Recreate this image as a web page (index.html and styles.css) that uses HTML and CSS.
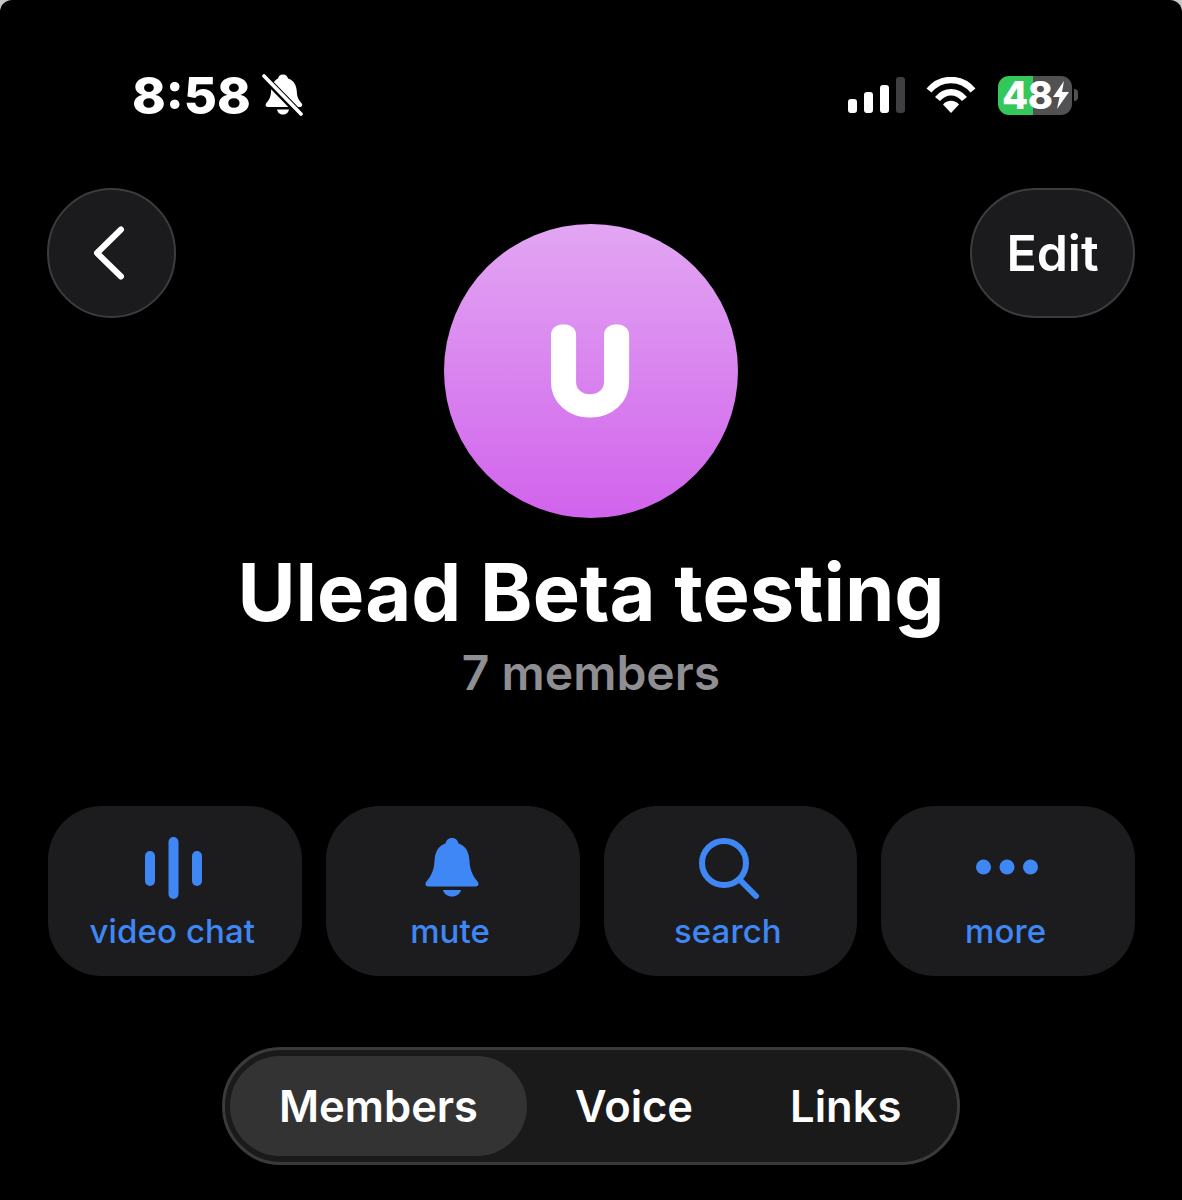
FILE: index.html
```html
<!DOCTYPE html>
<html lang="en">
<head>
    <meta charset="UTF-8">
    <meta name="viewport" content="width=device-width, initial-scale=1.0">
    <title>Ulead Beta testing</title>
    <link rel="stylesheet" href="styles.css">
</head>
<body>
    <div class="screen">
        <div class="status-bar">
            <div class="status-left">
                <span class="clock">8:58</span>
                <svg class="silent-icon" viewBox="0 0 42 44" aria-hidden="true">
                    <path fill="#fff" d="M21 1.500c3 0 4.600 2 5 4 6 1.800 8.500 7 8.800 13 .2 5 1.500 8 5 12 1 1.500.3 3.500-2 3.500H6c-2.300 0-3-2-2-3.500 3.500-4 4.800-7 5-12 .3-6 3-11.200 7-13 .4-2 2-4 5-4z"/>
                    <path fill="#fff" d="M15 36.500h12c-.5 3-3 5-6 5s-5.500-2-6-5z"/>
                    <path stroke="#000" stroke-width="7" d="M-1 1 41 44"/>
                    <path stroke="#fff" stroke-width="3.600" stroke-linecap="round" d="M2 3 39 41"/>
                </svg>
            </div>
            <div class="status-right">
                <div class="signal">
                    <span class="bar bar-1"></span>
                    <span class="bar bar-2"></span>
                    <span class="bar bar-3"></span>
                    <span class="bar bar-4"></span>
                </div>
                <svg class="wifi-icon" viewBox="0 0 50 36" aria-hidden="true">
                    <path fill="none" stroke="#fff" stroke-width="6.500" d="M3 13.500C15-.5 35-.5 47 13.500"/>
                    <path fill="none" stroke="#fff" stroke-width="6.500" d="M11.500 22C19 13 31 13 38.500 22"/>
                    <path fill="#fff" d="M25 36 17 27.500C21 22.500 29 22.500 33 27.500z"/>
                </svg>
                <div class="battery">
                    <div class="battery-body">
                        <span class="battery-level">48</span>
                        <svg class="bolt" viewBox="0 0 16 28" aria-hidden="true">
                            <path fill="#fff" d="M11 0 0 16h6.500L4 28 16 11H9z"/>
                        </svg>
                    </div>
                    <span class="battery-nub"></span>
                </div>
            </div>
        </div>

        <div class="header">
            <button class="round-btn back-btn" aria-label="Back">
                <svg viewBox="0 0 34 56" class="back-icon" aria-hidden="true">
                    <path fill="none" stroke="#fff" stroke-width="6" stroke-linecap="round" stroke-linejoin="round" d="M28 4.500 4 28l24 23.500"/>
                </svg>
            </button>
            <div class="avatar">
                <svg class="avatar-letter" viewBox="0 0 294 294">
                    <text transform="translate(146 182) scale(1.08 1)">U</text>
                </svg>
            </div>
            <button class="round-btn edit-btn">Edit</button>
        </div>

        <div class="group-info">
            <h1 class="group-name">Ulead Beta testing</h1>
            <p class="group-count">7 members</p>
        </div>

        <div class="actions">
            <div class="action-card">
                <svg class="action-icon" viewBox="0 0 64 64" aria-hidden="true">
                    <rect x="3" y="15" width="10" height="35" rx="5"/>
                    <rect x="26.500" y="1" width="10" height="62" rx="5"/>
                    <rect x="50" y="15" width="10" height="35" rx="5"/>
                </svg>
                <span>video chat</span>
            </div>
            <div class="action-card">
                <svg class="action-icon" viewBox="0 0 64 64" aria-hidden="true">
                    <path d="M32 2c3.500 0 5.800 2.200 6.300 5.200C46 10 49 16 49.500 25c.4 8 2.500 14 8 20.500 1.800 2 1.200 5-1.800 5H8.300c-3 0-3.600-3-1.800-5C12 39 14.100 33 14.500 25 15 16 18 10 25.700 7.200 26.200 4.200 28.500 2 32 2z"/>
                    <path d="M23 54h18c-1 4-4.500 6.500-9 6.500S24 58 23 54z"/>
                </svg>
                <span>mute</span>
            </div>
            <div class="action-card">
                <svg class="action-icon" viewBox="0 0 64 64" aria-hidden="true">
                    <circle class="line" cx="27" cy="27" r="22"/>
                    <path class="line" d="M43 44 59 60"/>
                </svg>
                <span>search</span>
            </div>
            <div class="action-card">
                <svg class="action-icon" viewBox="0 0 64 64" aria-hidden="true">
                    <circle cx="8.500" cy="31" r="7.500"/>
                    <circle cx="32" cy="31" r="7.500"/>
                    <circle cx="55.500" cy="31" r="7.500"/>
                </svg>
                <span>more</span>
            </div>
        </div>

        <div class="tabs-row">
            <div class="tabs">
                <div class="tab active">Members</div>
                <div class="tab voice">Voice</div>
                <div class="tab links">Links</div>
            </div>
        </div>
    </div>
</body>
</html>
```

FILE: styles.css
```css
html, body {
    margin: 0;
    padding: 0;
    background: #c8c8c8;
}
body {
    font-family: Inter, "Liberation Sans", sans-serif;
    color: #fff;
}
.screen {
    width: 1182px;
    height: 1200px;
    overflow: hidden;
    background: #000;
    border-radius: 12px 12px 0 0;
    box-sizing: border-box;
    padding: 0 47px;
}
.status-bar {
    display: flex;
    justify-content: space-between;
    align-items: center;
    height: 188px;
    padding-top: 2px;
    box-sizing: border-box;
}
.status-left {
    display: flex;
    align-items: center;
    gap: 11px;
    margin-left: 85px;
}
.clock {
    font-size: 51px;
    font-weight: 800;
    line-height: 1;
}
.silent-icon {
    width: 42px;
    height: 44px;
}
.status-right {
    display: flex;
    align-items: center;
    margin-right: 57px;
}
.signal {
    display: flex;
    align-items: flex-end;
    gap: 7px;
    height: 36px;
}
.bar {
    width: 9px;
    background: #fff;
    border-radius: 3px;
}
.bar-1 { height: 14px; }
.bar-2 { height: 21px; }
.bar-3 { height: 28px; }
.bar-4 { height: 36px; background: #3f3f41; }
.wifi-icon {
    width: 50px;
    height: 36px;
    margin-left: 21px;
}
.battery {
    display: flex;
    align-items: center;
    gap: 2px;
    margin-left: 22px;
}
.battery-body {
    display: flex;
    align-items: center;
    width: 74px;
    height: 39px;
    border-radius: 11px;
    background: linear-gradient(90deg, #34c759 0, #34c759 47%, #515153 47%);
    padding-left: 4px;
    box-sizing: border-box;
}
.battery-level {
    font-size: 38px;
    font-weight: 800;
    line-height: 1;
    letter-spacing: -0.5px;
}
.bolt {
    width: 16px;
    height: 28px;
    margin-left: 1px;
}
.battery-nub {
    width: 4px;
    height: 12px;
    background: #515153;
    border-radius: 0 4px 4px 0;
}
.header {
    display: grid;
    grid-template-columns: 1fr auto 1fr;
    align-items: start;
    height: 358px;
}
.round-btn {
    height: 130px;
    border: 2px solid #3c3c3e;
    border-radius: 65px;
    background: #1b1b1d;
    color: #fff;
    font-family: inherit;
    box-sizing: border-box;
    padding: 0;
    display: flex;
    align-items: center;
    justify-content: center;
}
.back-btn {
    width: 129px;
}
.back-icon {
    width: 34px;
    height: 56px;
    margin-right: 4px;
}
.edit-btn {
    width: 165px;
    justify-self: end;
    font-size: 50px;
    font-weight: 600;
}
.avatar {
    width: 294px;
    height: 294px;
    margin-top: 36px;
    border-radius: 50%;
    background: linear-gradient(180deg, #e2a6f3 0%, #d163ec 100%);
}
.avatar-letter {
    display: block;
    width: 294px;
    height: 294px;
}
.avatar-letter text {
    font-family: Inter, sans-serif;
    font-size: 98px;
    font-weight: 100;
    text-anchor: middle;
    fill: #fff;
    stroke: #fff;
    stroke-width: 21px;
    stroke-linejoin: round;
    stroke-linecap: round;
}
.group-info {
    text-align: center;
}
.group-name {
    margin: 0;
    font-size: 79.4px;
    font-weight: 700;
    line-height: 92px;
}
.group-count {
    margin: 8px 0 0;
    font-size: 48px;
    font-weight: 600;
    line-height: 54px;
    color: #8e8e93;
}
.actions {
    display: grid;
    grid-template-columns: repeat(4, 1fr);
    gap: 24px;
    margin: 106px 0 0 1px;
}
.action-card {
    height: 170px;
    border-radius: 54px;
    background: #1c1c1e;
    display: flex;
    flex-direction: column;
    align-items: center;
    color: #3f87f5;
    font-size: 33px;
    font-weight: 500;
    letter-spacing: 0.1px;
    padding-top: 30px;
    box-sizing: border-box;
}
.action-card span {
    margin-top: 8px;
    margin-right: 5px;
}
.action-icon {
    width: 64px;
    height: 64px;
    fill: #3f87f5;
    margin: 0 2px 3px 0;
}
.action-icon .line {
    fill: none;
    stroke: #3f87f5;
    stroke-width: 6px;
    stroke-linecap: round;
}
.tabs-row {
    display: flex;
    justify-content: center;
    margin-top: 71px;
}
.tabs {
    display: flex;
    align-items: center;
    width: 738px;
    height: 118px;
    border: 3px solid #3a3a3c;
    border-radius: 59px;
    background: #1a1a1a;
    box-sizing: border-box;
    padding: 0 5px;
    font-size: 43.5px;
    font-weight: 600;
}
.tab {
    line-height: 100px;
}
.tab.active {
    width: 297px;
    text-align: center;
    background: #333;
    border-radius: 50px;
}
.tab.voice {
    margin-left: 48px;
}
.tab.links {
    margin-left: 97px;
}
```
